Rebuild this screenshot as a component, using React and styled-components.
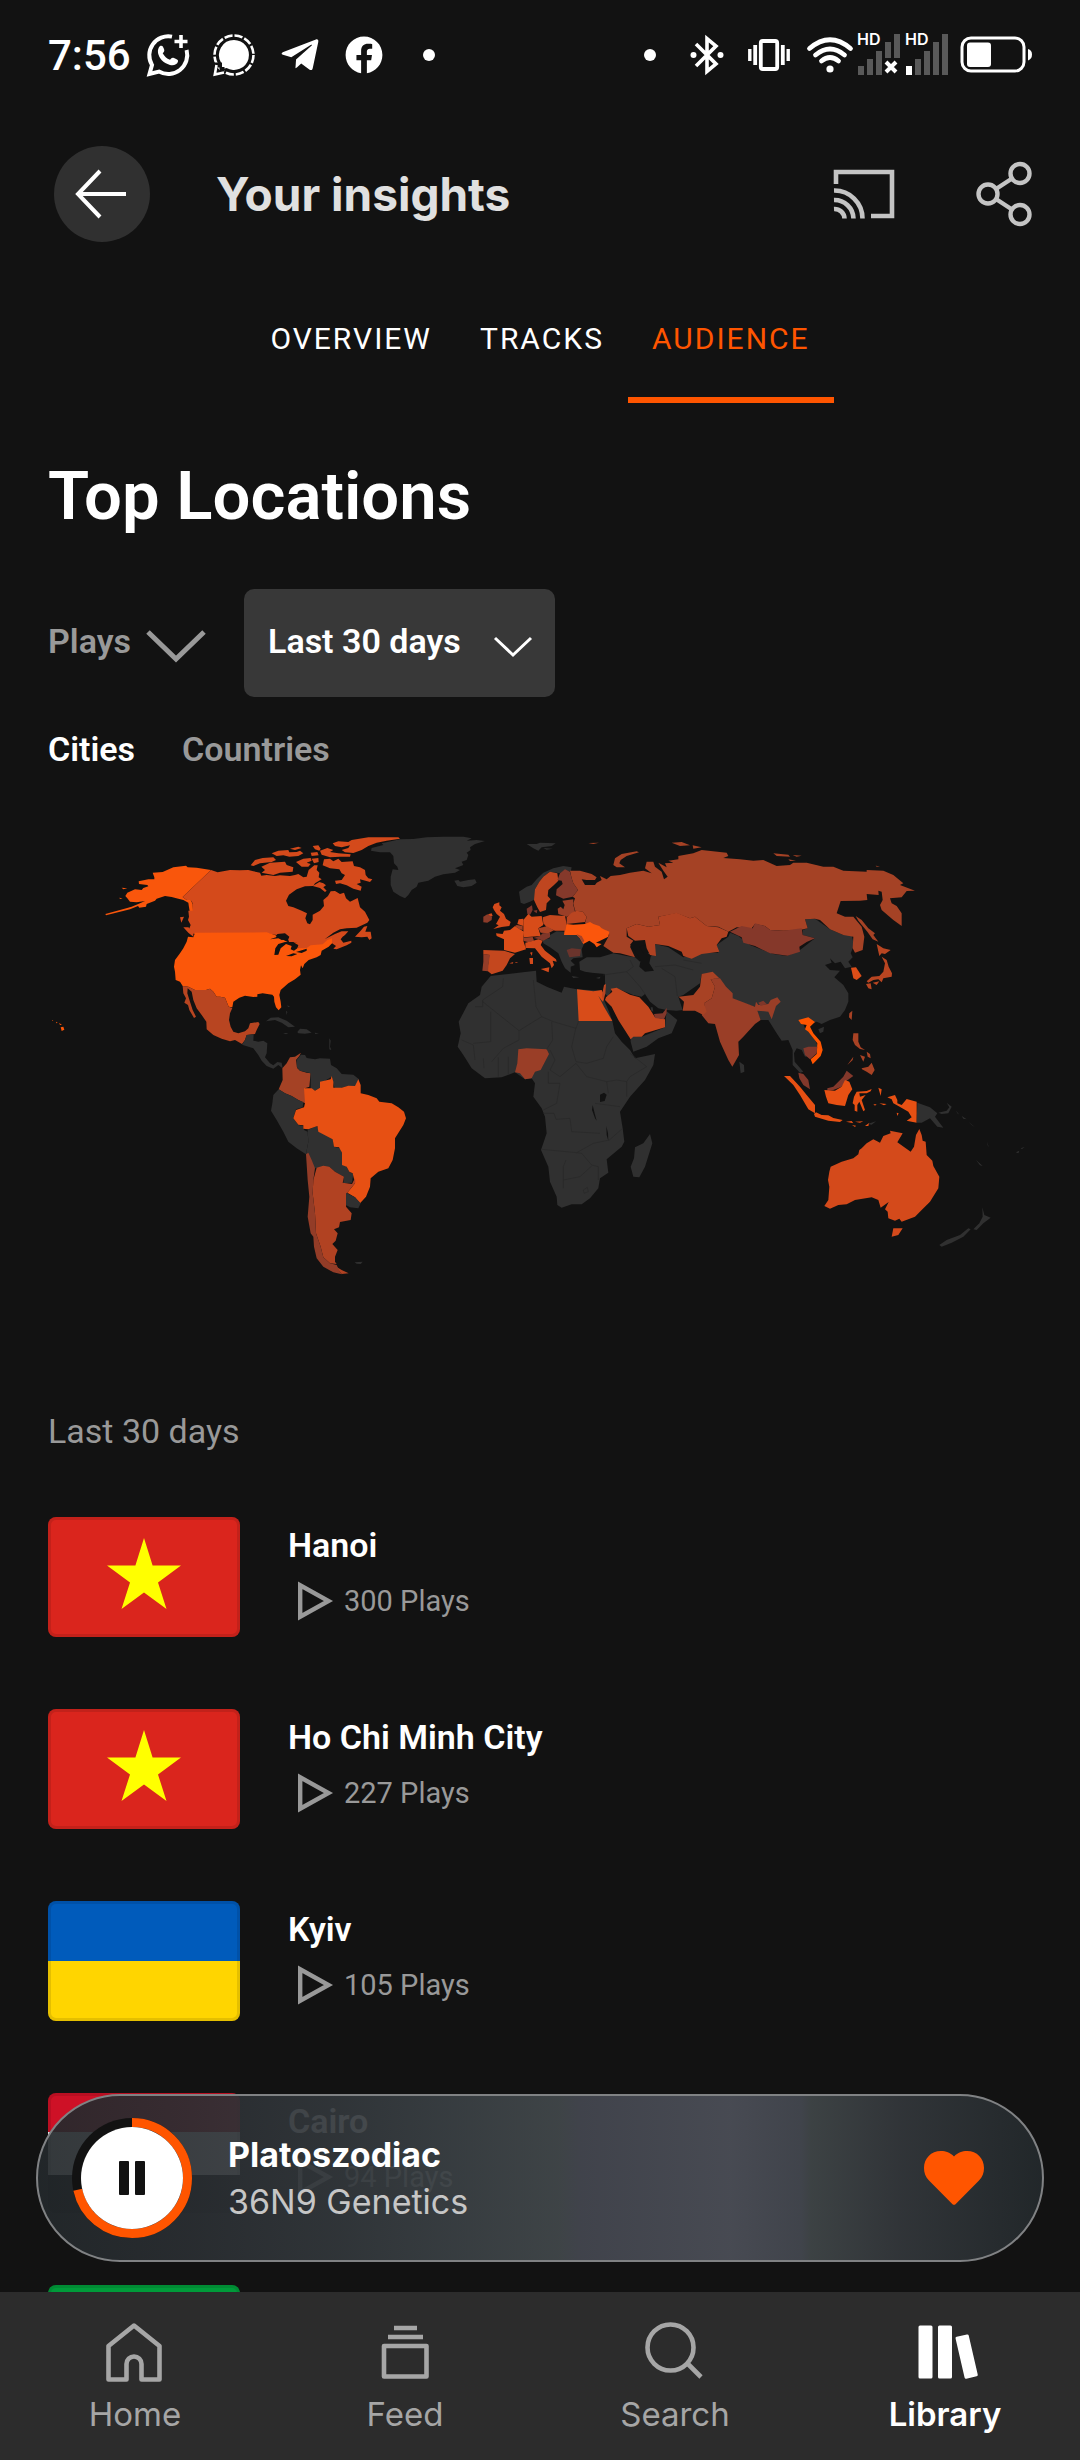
import React, { useState } from "react";
import styled, { createGlobalStyle } from "styled-components";
import { FaFacebook, FaTelegramPlane } from "react-icons/fa";

const GlobalStyle = createGlobalStyle`
  * {
    box-sizing: border-box;
  }
  body {
    margin: 0;
    background-color: #121212;
    color: #ffffff;
    font-family: Roboto, sans-serif;
  }
  button,
  select {
    padding: 0;
    border: none;
    background: none;
    color: inherit;
    font: inherit;
    cursor: pointer;
  }
  svg {
    display: block;
    flex-shrink: 0;
    overflow: visible;
  }
`;

const Screen = styled.div`
  position: relative;
  display: flex;
  flex-direction: column;
  height: 100vh;
  overflow: hidden;
`;

const StatusBar = styled.div`
  display: flex;
  align-items: center;
  justify-content: space-between;
  flex-shrink: 0;
  height: 110px;
  padding: 0 46px 0 48px;
`;

const StatusGroup = styled.div`
  display: flex;
  align-items: center;
  gap: ${props => props.$gap}px;
`;

const Clock = styled.span`
  margin-right: -8px;
  font-size: 42px;
  font-weight: 500;
`;

const Dot = styled.span`
  width: 12px;
  height: 12px;
  margin: 0 ${props => props.$space}px;
  border-radius: 50%;
  background-color: #ffffff;
`;

const Header = styled.header`
  display: flex;
  align-items: center;
  flex-shrink: 0;
  height: 168px;
  padding: 0 48px 0 54px;
`;

const BackButton = styled.button`
  display: flex;
  align-items: center;
  justify-content: center;
  width: 96px;
  height: 96px;
  border-radius: 50%;
  background-color: #303030;
`;

const Title = styled.h1`
  flex: 1;
  margin: 0 0 0 66px;
  color: #e0e0e0;
  font-family: Inter, sans-serif;
  font-size: 46px;
  font-weight: 700;
`;

const HeaderActions = styled.div`
  display: flex;
  align-items: center;
  gap: 82px;
  color: #c4c4c4;
`;

const Tabs = styled.nav`
  display: flex;
  justify-content: center;
  flex-shrink: 0;
`;

const Tab = styled.button`
  height: 125px;
  padding: 2px 24px 0;
  border-bottom: 6px solid ${props => (props.$active ? "#ff5500" : "transparent")};
  color: ${props => (props.$active ? "#ff5500" : "#ffffff")};
  font-size: 30px;
  letter-spacing: 2px;
`;

const Content = styled.main`
  flex: 1;
  min-height: 0;
  padding: 53px 48px 0;
  overflow: hidden;
`;

const SectionTitle = styled.h2`
  margin: 0 0 53px;
  font-size: 67px;
  font-weight: 600;
  line-height: 80px;
`;

const Filters = styled.div`
  display: flex;
  align-items: center;
  gap: 38px;
`;

const Filter = styled.label`
  display: flex;
  align-items: center;
  gap: ${props => (props.$boxed ? 32 : 14)}px;
  height: 108px;
  padding: ${props => (props.$boxed ? "0 22px 0 24px" : "0")};
  border-radius: 10px;
  background-color: ${props => (props.$boxed ? "#383838" : "transparent")};
  color: ${props => (props.$boxed ? "#ffffff" : "#999999")};
  font-size: 34px;
  font-weight: 600;
  line-height: 40px;
  select {
    margin-bottom: 4px;
    appearance: none;
    outline: none;
  }
  svg {
    margin-top: 8px;
  }
`;

const Scopes = styled.div`
  display: flex;
  gap: 47px;
  margin: 32px 0 51px;
`;

const Scope = styled.button`
  color: ${props => (props.$active ? "#ffffff" : "#999999")};
  font-size: 34px;
  font-weight: 600;
  line-height: 40px;
`;

const Map = styled.svg`
  width: 100%;
  height: auto;
`;

const Caption = styled.p`
  margin: 111px 0 66px;
  color: #999999;
  font-size: 34px;
  line-height: 40px;
`;

const CityList = styled.ul`
  display: flex;
  flex-direction: column;
  gap: 72px;
  margin: 0;
  padding: 0;
  list-style: none;
`;

const CityRow = styled.li`
  display: flex;
  gap: 48px;
`;

const Flag = styled.div`
  position: relative;
  display: flex;
  width: 192px;
  height: 120px;
  overflow: hidden;
  border-radius: 8px;
  &::after {
    content: "";
    position: absolute;
    inset: 0;
    border: 3px solid rgba(0, 0, 0, 0.1);
    border-radius: 8px;
  }
`;

const CityInfo = styled.div`
  display: flex;
  flex-direction: column;
  gap: 16px;
  padding-top: 8px;
`;

const CityName = styled.span`
  font-size: 34px;
  font-weight: 600;
  line-height: 40px;
`;

const Plays = styled.span`
  display: flex;
  align-items: center;
  gap: 11px;
  padding-left: 10px;
  color: #999999;
  font-size: 29px;
  line-height: 40px;
`;

const Player = styled.section`
  position: absolute;
  right: 36px;
  bottom: 198px;
  left: 36px;
  display: flex;
  align-items: center;
  height: 168px;
  padding: 0 58px 0 34px;
  border: 2px solid #808284;
  border-radius: 84px;
  background: linear-gradient(
    90deg,
    rgba(35, 40, 43, 0.92) 0%,
    rgba(42, 46, 50, 0.92) 15%,
    rgba(50, 55, 59, 0.92) 30%,
    rgba(57, 63, 67, 0.92) 40%,
    rgba(66, 72, 75, 0.92) 52%,
    rgba(68, 71, 80, 0.92) 54%,
    rgba(76, 79, 88, 0.92) 69%,
    rgba(68, 72, 80, 0.92) 76%,
    rgba(64, 70, 72, 0.92) 77%,
    rgba(51, 55, 59, 0.92) 86%,
    rgba(35, 41, 44, 0.92) 100%
  );
  font-family: Inter, sans-serif;
`;

const TrackInfo = styled.div`
  flex: 1;
  margin-left: 36px;
  color: #c6c6c6;
  font-size: 34px;
  line-height: 47px;
  strong {
    display: block;
    color: #ffffff;
    font-weight: 700;
  }
`;

const BottomNav = styled.nav`
  display: grid;
  grid-template-columns: repeat(4, 1fr);
  flex-shrink: 0;
  height: 168px;
  background-color: #2c2c2c;
`;

const NavItem = styled.a`
  display: flex;
  flex-direction: column;
  align-items: center;
  gap: 8px;
  padding-top: 24px;
  color: ${props => (props.$active ? "#ffffff" : "#a6a6a6")};
  font-family: Inter, sans-serif;
  font-size: 33px;
  font-weight: ${props => (props.$active ? 600 : 400)};
  line-height: 40px;
  text-decoration: none;
`;

const WhatsAppIcon = () => (
  <svg width="42" height="42" viewBox="0 0 42 42" fill="none" stroke="#fff">
    <path d="M25 2.6A19 19 0 0 0 5 31L2.5 40 12 37.6A19 19 0 0 0 39.6 16" strokeWidth="4" />
    <path d="M34 1v13M27.5 7.5h13" strokeWidth="3.6" />
    <path
      d="M13 12c2-1 3 0 4 3 .7 2 .2 2.700-1.300 4.200 1.600 3 4 5.300 7.300 6.600 1.500-2 2.300-2.500 4-1.700 3.400 1.600 4.400 2 4 3.500-.8 3.400-5 4.400-8 3.400C16 29 12 24 11 19c-.4-3 .4-5.500 2-7z"
      fill="#fff"
      stroke="none"
    />
  </svg>
);

const SignalIcon = () => (
  <svg width="42" height="42" viewBox="0 0 42 42">
    <path d="M21 6a15 15 0 1 1-7.500 28L6 36l2-7.500A15 15 0 0 1 21 6z" fill="#fff" />
    <circle cx="21" cy="21" r="19.500" fill="none" stroke="#fff" strokeWidth="2.600" strokeDasharray="8.200 2" />
    <path d="M1 31h8M9 41v-8" stroke="#121212" strokeWidth="5" />
    <path d="M3.500 31L1.800 40.500 11 38.500" fill="none" stroke="#fff" strokeWidth="2.600" />
  </svg>
);

const BluetoothIcon = () => (
  <svg width="34" height="38" viewBox="0 0 34 38" fill="none" stroke="#fff" strokeWidth="3.600">
    <path d="M6 8l20 20-9 7.500V2.500L26 10 6 30" />
    <circle cx="3.500" cy="19" r="3" fill="#fff" stroke="none" />
    <circle cx="30.500" cy="19" r="3" fill="#fff" stroke="none" />
  </svg>
);

const VibrateIcon = () => (
  <svg width="42" height="32" viewBox="0 0 42 32" stroke="#fff" fill="none">
    <rect x="12.800" y="2" width="16.400" height="28" rx="2" strokeWidth="3.800" />
    <path d="M7.200 6v20M34.800 6v20" strokeWidth="3.800" />
    <path d="M1.800 10v12M40.200 10v12" strokeWidth="3.400" />
  </svg>
);

const WifiIcon = () => (
  <svg width="46" height="36" viewBox="0 0 46 36" fill="none" stroke="#fff" strokeWidth="4.800" strokeLinecap="round">
    <path d="M2.500 11.500Q23-6 43.500 11.500M8.500 18q14.500-12 29 0M14.500 24q8.500-7 17 0" />
    <circle cx="23" cy="32" r="3.600" fill="#fff" stroke="none" />
  </svg>
);

const SimIcon = ({ offline }) => (
  <svg width="44" height="44" viewBox="0 0 44 44">
    <g fill="#595959">
      <rect x="1" y="33" width="6" height="9" fill={offline ? "#595959" : "#fff"} />
      <rect x="10" y="26" width="6" height="16" />
      <rect x="19" y="18" width="6" height="24" />
      <rect x="28" y="9" width="6" height={offline ? 16 : 33} />
      <rect x="37" y="1" width="6" height={offline ? 24 : 41} />
    </g>
    {offline && <path d="M29 29l10 10M39 29L29 39" stroke="#fff" strokeWidth="4" />}
    <text x="0" y="12" fill="#fff" fontFamily="Inter, sans-serif" fontSize="16" fontWeight="600">
      HD
    </text>
  </svg>
);

const BatteryIcon = () => (
  <svg width="74" height="38" viewBox="0 0 74 38">
    <rect x="2" y="2" width="62" height="33" rx="9" fill="none" stroke="#fff" strokeWidth="3" />
    <rect x="7" y="6.500" width="24" height="24.500" rx="3" fill="#fff" />
    <path d="M68 13q4 1 4 5.500T68 24.500z" fill="#fff" />
  </svg>
);

const ArrowIcon = () => (
  <svg width="52" height="50" viewBox="0 0 52 50" fill="none" stroke="#fff" strokeWidth="4">
    <path d="M24 2L2 25l22 23M2 25h48" />
  </svg>
);

const CastIcon = () => (
  <svg width="60" height="50" viewBox="0 0 60 50" fill="none" stroke="currentColor" strokeWidth="4.600">
    <path d="M2 15V3h56v44H37" />
    <path d="M0 21.500a28 28 0 0 1 28.500 28M0 31a19 19 0 0 1 19.500 18.500M0 40a10 10 0 0 1 10.500 9.500" />
  </svg>
);

const ShareIcon = () => (
  <svg width="56" height="64" viewBox="0 0 56 64" fill="none" stroke="currentColor" strokeWidth="4.400">
    <circle cx="12" cy="32" r="9.500" />
    <circle cx="44" cy="11.500" r="9.500" />
    <circle cx="44" cy="52.500" r="9.500" />
    <path d="M20 27L36 16.500M20 37L36 47.500" />
  </svg>
);

const Chevron = ({ width, height, stroke }) => (
  <svg width={width} height={height} viewBox={`0 0 ${width} ${height}`} fill="none" stroke="currentColor">
    <path d={`M2 2L${width / 2} ${height - stroke}L${width - 2} 2`} strokeWidth={stroke} />
  </svg>
);

const PlayIcon = () => (
  <svg width="35" height="40" viewBox="0 0 35 40" fill="none" stroke="currentColor" strokeWidth="4.400">
    <path d="M2.200 4.300v31.400L30.500 20z" />
  </svg>
);

const ProgressIcon = () => (
  <svg width="120" height="120" viewBox="0 0 120 120">
    <circle cx="60" cy="60" r="60" fill="#121212" />
    <circle
      cx="60"
      cy="60"
      r="55.500"
      fill="none"
      stroke="#ff5500"
      strokeWidth="9"
      pathLength="100"
      strokeDasharray="71.600 28.400"
      transform="rotate(-90 60 60)"
    />
    <circle cx="60" cy="60" r="51" fill="#fff" />
    <rect x="47" y="43" width="10" height="34" rx="1" fill="#121212" />
    <rect x="63" y="43" width="10" height="34" rx="1" fill="#121212" />
  </svg>
);

const HeartIcon = () => (
  <svg width="60" height="54" viewBox="0 0 60 54">
    <path
      d="M30 5.500C34 1.500 38 0 43 0c10 0 17 7.500 17 17 0 5-1.500 9-5 12.500L31.500 53.200q-1.500 1.200-3 0L5 29.500C1.500 26 0 22 0 17 0 7.500 7 0 17 0c5 0 9 1.500 13 5.500z"
      fill="#ff5500"
    />
  </svg>
);

const HomeIcon = () => (
  <svg width="60" height="70" viewBox="0 0 60 70" fill="none" stroke="currentColor" strokeWidth="4.600">
    <path
      d="M29 9.500L3.500 30v33.500h18V48a7.500 7.500 0 0 1 15 0v15.500h18V30z"
      strokeLinejoin="round"
    />
  </svg>
);

const FeedIcon = () => (
  <svg width="60" height="70" viewBox="0 0 60 70" fill="none" stroke="currentColor" strokeWidth="4.600">
    <path d="M19 12h23M13 21h35" />
    <rect x="9" y="30" width="42.500" height="30.500" strokeLinejoin="round" />
  </svg>
);

const SearchIcon = () => (
  <svg width="60" height="70" viewBox="0 0 60 70" fill="none" stroke="currentColor" strokeWidth="4.600">
    <circle cx="25.500" cy="31.500" r="23" />
    <path d="M42 47l14 14" />
  </svg>
);

const LibraryIcon = () => (
  <svg width="60" height="70" viewBox="0 0 60 70" fill="currentColor">
    <rect x="3.500" y="9.500" width="14" height="53" rx="1.500" />
    <rect x="23" y="9.500" width="14" height="53" rx="1.500" />
    <rect x="45" y="19" width="13.500" height="43" rx="1.500" transform="rotate(-13 52 41)" />
  </svg>
);

const americas = [
  // alaska
  ["#f9560c", "M438 137L443 142L470 143L513 150L428 231L440 240L452 240L458 252L459 272L450 280L447 262L445 248L430 240L415 236L395 231L375 228L350 236L345 242L320 252L318 260L298 263L294 258L270 268L240 275L198 286L196 282L240 270L275 260L300 250L315 243L290 247L270 245L262 235L256 228L262 218L285 208L305 210L310 204L325 199L322 195L297 192L296 184L325 178L343 178L343 172L338 158L368 156L400 142Z M245 203L262 205L250 208Z M238 233L248 235L240 237Z"],
  // canada
  ["#d44a1b", "M513 150L533 157L570 150L600 151L625 150L640 154L660 158L664 167L680 165L705 168L720 166L750 168L765 165L775 162L790 172L800 170L806 150L823 136L833 136L830 150L838 158L836 172L845 178L825 190L820 198L795 199L770 208L747 224L738 242L745 258L760 262L785 272L801 280L796 295L802 310L810 313L818 300L818 284L840 272L852 258L850 240L864 228L872 214L885 213L900 222L912 218L918 235L930 245L953 234L960 262L975 275L988 300L982 308L950 323L920 325L900 328L880 338L855 357L885 342L905 334L925 334L915 345L908 350L902 358L910 368L934 362L934 368L920 376L890 388L880 386L888 378L876 370L862 372L800 390L770 392L775 385L770 368L748 368L742 352L725 346L705 344L680 340L465 342L455 340L448 325L452 315L444 300L447 290L445 272L459 272L458 250L452 240L440 240L428 231Z"],
  ["#d44a1b", "M632 136L645 120L668 114L700 112L708 120L695 126L660 130L640 138Z M664 140L690 128L735 125L740 135L760 142L758 155L720 158L700 165L665 158L675 150Z M695 100L715 92L745 90L748 97L770 96L780 92L790 100L775 108L748 110L730 106L710 108Z M750 86L775 80L785 84L765 90Z M768 126L790 116L812 114L815 122L800 128L812 132L805 140L785 140Z M812 98L832 96L836 106L815 108Z M818 78L835 76L842 86L838 92L825 88Z M815 116L835 114L836 126L822 130Z M840 92L862 84L880 90L870 96L895 100L932 103L930 110L900 110L870 112L845 104Z"],
  ["#d44a1b", "M878 70L895 64L925 66L935 60L985 52L1075 52L1080 56L1040 62L1010 68L985 78L965 90L940 99L915 97L905 90L925 84L930 76L905 82L885 78Z M848 136L852 118L870 116L880 124L895 116L905 126L938 124L942 138L960 142L975 150L977 165L985 175L997 178L990 186L960 178L962 188L950 192L965 200L962 212L940 206L920 196L900 190L888 192L885 182L905 180L915 165L905 160L898 148L870 145Z M818 198L832 190L838 186L850 190L858 196L850 202L860 212L855 216L840 204Z"],
  ["#d44a1b", "M945 350L962 332L972 320L982 318L976 335L992 335L995 355L988 360L982 350L965 352Z M430 322L445 322L460 335L460 350L445 338Z M420 292L432 290L424 308Z"],
  // usa
  ["#fb570a", "M465 338L680 337L705 345L735 362L748 368L770 368L775 385L800 384L812 376L848 373L862 360L876 355L876 370L866 380L845 392L842 405L830 412L806 420L793 432L788 445L783 436L780 450L782 464L765 478L745 490L722 510L718 525L722 545L724 562L716 571L708 562L703 545L702 530L697 524L682 522L668 520L652 523L652 530L640 531L615 527L598 533L580 545L577 562L566 560L555 533L540 530L530 530L520 515L510 506L498 510L465 510L445 500L428 498L420 485L407 480L405 455L402 440L405 420L420 400L430 385L440 365L444 350L460 352Z M62 622L70 620L73 629L65 633Z M36 600L40 602L37 603Z M48 605L53 608L49 610Z M57 609L66 614L60 615Z"],
  ["#121212", "M690 358L708 352L712 342L735 340L748 350L745 358L725 360L715 355Z M703 405L706 385L715 372L735 366L760 366L775 376L772 385L762 392L752 388L755 378L738 372L722 385L715 404Z M738 408L760 400L772 402L755 409Z M768 396L800 386L800 392L785 399Z"],
  // mexico
  ["#b84521", "M428 498L445 500L465 510L498 510L510 506L520 515L530 530L540 530L555 533L566 560L577 564L570 580L567 600L572 620L580 635L595 640L615 634L625 625L630 610L655 606L659 612L650 630L645 642L620 645L615 660L606 672L585 660L570 664L545 656L520 645L500 628L499 605L485 585L470 565L460 540L455 515L443 505L442 520L450 545L458 570L468 590L462 594L448 570L444 555L433 548L438 535L430 520Z"],
  // central america and the caribbean
  ["#303030", "M606 674L615 660L620 645L641 643L640 662L655 665L670 662L682 670L680 700L675 712L690 730L700 736L712 726L725 728L728 745L715 735L700 746L680 738L665 722L655 705L640 685Z M678 604L692 593L715 592L740 602L765 620L745 622L725 608L705 600Z M772 636L780 626L800 628L815 638L795 641L775 640Z M729 639L745 640L738 643Z M824 638L837 640L826 642Z M738 572L742 576L740 585Z M742 556L750 560L744 561Z M868 655L872 662L870 680L874 690L868 688Z"],
  ["#a54225", "M783 698L778 708L768 720L772 745L780 752L800 758L812 760L808 800L795 805L795 850L775 840L755 828L735 820L716 808L728 780L727 745L740 730L750 712L765 710Z"],
  ["#303030", "M783 704L795 705L800 714L825 718L840 715L870 716L873 735L890 745L905 762L940 764L957 778L948 798L925 798L905 803L885 807L878 785L875 770L850 785L842 790L840 803L825 812L812 805L812 760L780 752L770 740L770 720Z M716 808L735 820L755 828L775 840L790 846L788 862L768 868L760 895L775 915L790 918L792 930L803 935L805 965L798 1003L770 985L745 965L730 935L710 900L693 872L697 850L700 825Z"],
  ["#303030", "M803 930L830 918L838 935L865 945L880 958L882 980L900 985L906 998L908 1030L920 1040L928 1055L940 1062L936 1088L910 1090L912 1070L885 1055L868 1040L840 1043L822 1045L812 1020L798 1003L805 965Z"],
  // brazil
  ["#e75013", "M840 785L850 783L872 778L875 768L880 785L880 803L905 803L925 797L945 798L955 778L962 795L962 820L985 825L1010 835L1018 845L1055 850L1075 862L1092 875L1098 895L1090 915L1065 955L1065 985L1058 1020L1045 1045L1015 1055L992 1075L990 1100L978 1130L960 1150L945 1132L922 1118L945 1090L938 1060L928 1055L920 1040L906 1035L906 998L897 982L882 980L878 958L835 935L832 918L805 928L790 926L790 916L775 914L760 895L768 870L792 862L795 850L792 805L815 805L825 812L840 803Z"],
  ["#b14222", "M830 1043L850 1037L868 1040L885 1055L912 1070L908 1088L936 1092L945 1074L946 1088L922 1118L918 1160L935 1180L932 1200L900 1206L897 1222L882 1228L893 1240L887 1262L877 1272L893 1290L885 1310L885 1325L890 1332L870 1330L850 1312L842 1280L828 1240L825 1180L818 1120L820 1080Z M885 1338L905 1350L926 1360L905 1362Z"],
  ["#933c27", "M798 1003L805 998L815 1020L825 1045L820 1080L818 1120L825 1180L828 1240L842 1280L850 1312L870 1330L890 1335L898 1352L905 1363L880 1357L850 1340L830 1315L822 1280L820 1250L812 1240L803 1190L808 1130L803 1080Z"],
  ["#303030", "M918 1118L945 1132L962 1150L955 1165L930 1162L918 1155Z M944 1327L968 1325L962 1332L950 1331Z"]
];

const eurasiaAfrica = [
  // greenland, iceland, svalbard
  ["#303030", "M-87 92L-60 97L-30 97L-20 108L-18 130L-8 140L-5 150L-22 148L-28 170L-28 195L-20 215L0 228L15 235L25 225L35 210L50 200L55 188L85 182L105 170L130 163L165 158L180 150L165 145L190 135L185 125L200 120L205 105L200 98L212 90L210 82L225 72L255 63L230 60L200 62L215 55L190 50L130 50L80 52L40 57L0 58L-55 70L-50 75L-85 84Z M163 182L175 180L180 185L205 180L225 178L230 188L215 198L190 202L172 198Z M380 72L410 72L420 68L467 70L455 78L425 82L415 92L400 85Z M430 84L458 86L440 89Z"],
  // africa
  ["#303030", "M272 468L290 466L325 462L375 456L408 452L410 485L440 500L485 518L492 500L530 508L605 512L612 540L625 570L637 603L645 640L665 665L690 690L705 715L765 702L760 735L735 780L690 830L660 875L668 925L673 965L665 980L620 1018L625 1058L600 1075L595 1105L570 1135L545 1153L515 1153L485 1163L472 1155L470 1130L450 1085L445 1040L423 990L440 940L435 890L425 865L400 830L405 790L395 775L375 778L345 757L305 772L255 775L215 745L190 705L173 680L182 640L176 605L205 550L240 525L245 500Z M750 942L757 970L735 1040L718 1072L700 1070L692 1040L702 1015L705 982L730 970Z"],
  // turkey across to china
  ["#303030", "M538 425L560 412L600 412L640 400L680 408L705 412L720 425L745 400L762 390L765 372L805 382L850 412L905 398L955 398L950 375L985 350L990 338L1015 348L1050 375L1120 402L1160 408L1200 390L1245 355L1208 345L1208 330L1223 325L1215 298L1245 296L1290 328L1330 345L1355 345L1362 375L1352 400L1358 412L1345 425L1355 440L1335 445L1322 425L1305 430L1290 415L1295 428L1275 435L1290 450L1320 452L1303 472L1330 495L1345 520L1345 545L1335 570L1320 590L1290 600L1265 612L1250 605L1232 612L1205 600L1215 625L1240 650L1255 680L1245 705L1215 710L1205 690L1190 685L1182 700L1184 725L1210 755L1200 758L1178 735L1178 690L1165 660L1145 662L1130 640L1105 600L1082 600L1070 575L1065 560L1000 540L970 500L940 470L905 462L900 490L850 525L835 530L848 570L830 572L800 570L775 565L750 545L735 522L725 530L700 525L650 505L635 508L625 530L612 520L615 490L615 462L575 458L555 455L540 450Z"],
  // balkans and greece
  ["#303030", "M450 345L470 334L492 335L530 345L545 355L552 372L545 388L548 412L520 415L512 422L525 435L512 440L512 458L495 445L485 425L475 400L450 382L430 370L428 360L450 355Z M515 468L538 472L520 474Z M588 474L602 470L598 476Z"],
  ["#d44a1b", "M283 252L298 247L298 256L305 262L300 272L312 282L318 296L332 306L328 318L305 321L280 327L296 316L288 312L293 303L300 290L290 282L282 270L278 262Z M264 283L275 280L278 288L270 290Z"],
  ["#8c3b29", "M250 290L262 283L276 290L275 300L262 308L250 307Z"],
  ["#303030", "M357 215L380 200L395 195L410 178L430 158L460 145L490 138L515 142L512 155L495 150L480 160L450 155L430 170L418 185L405 208L405 238L390 245L372 252L362 248Z"],
  ["#bf4620", "M405 208L418 185L430 170L450 155L472 160L475 182L462 195L445 210L443 228L452 238L440 250L438 270L420 276L412 262L402 240Z"],
  // russia
  ["#a54225", "M510 152L540 152L575 162L590 172L585 180L560 180L545 178L555 195L585 195L590 188L605 180L600 168L620 178L632 168L660 165L690 158L730 152L755 160L735 145L740 125L760 125L765 140L785 155L792 178L803 170L790 152L775 128L800 142L795 130L820 128L805 122L835 118L835 108L880 100L905 90L980 98L985 108L970 114L1020 118L1060 122L1090 120L1130 138L1170 135L1180 128L1220 128L1270 140L1300 140L1330 152L1400 155L1400 150L1450 152L1480 165L1510 190L1500 195L1545 212L1520 213L1505 232L1470 235L1475 250L1490 258L1505 280L1505 318L1480 300L1445 270L1440 255L1448 240L1445 215L1435 212L1436 225L1400 222L1402 240L1380 242L1322 243L1310 280L1335 290L1360 290L1385 320L1393 350L1388 390L1365 398L1358 385L1360 350L1330 345L1290 328L1260 300L1245 296L1215 298L1223 325L1200 330L1150 332L1110 330L1095 318L1065 312L1055 325L1010 322L985 335L955 320L920 318L885 290L870 295L830 280L775 290L780 315L745 320L710 312L680 325L680 350L705 365L690 380L705 412L660 400L640 398L610 378L628 345L615 330L570 322L555 310L560 290L548 275L525 272L520 250L525 235L518 230L534 210L520 190L515 175Z"],
  ["#a54225", "M640 135L645 115L665 102L710 94L717 97L680 108L662 120L658 130L675 142L650 142Z M815 68L845 66L870 76L840 78Z M878 76L905 82L880 86Z M565 69L597 68L580 72Z M1120 100L1165 104L1170 110L1130 108Z M1178 105L1205 107L1190 110Z M1165 118L1188 122L1170 123Z M1427 137L1440 139L1430 140Z M1367 288L1385 300L1405 325L1425 340L1420 345L1435 365L1418 358L1402 335L1375 302Z"],
  ["#85392b", "M480 160L495 148L510 155L515 175L520 190L534 210L518 230L490 236L468 226L470 208L488 192L485 182L472 180Z"],
  ["#7a352b", "M380 266L396 256L398 270L390 285L382 282Z M400 272L412 270L410 280Z"],
  ["#9a3e27", "M487 242L520 238L520 255L525 275L510 285L500 290L475 282L473 266L482 260L490 268L494 255Z"],
  ["#ba4521", "M500 292L515 278L530 272L548 275L560 290L555 306L500 312Z"],
  ["#fb560c", "M495 320L500 312L520 314L555 312L570 306L580 312L598 318L605 325L628 335L625 350L605 360L588 368L605 372L590 382L583 372L568 362L550 372L540 355L530 345L492 345Z"],
  ["#a54225", "M530 343L545 348L553 362L548 370L540 355Z"],
  ["#c4471e", "M428 292L450 285L495 288L500 312L496 332L465 332L440 322L430 310Z"],
  ["#d84c19", "M370 300L385 282L395 290L425 288L430 315L415 325L422 348L372 352L370 330Z"],
  ["#dc4d18", "M288 340L308 342L312 332L330 330L345 318L360 328L372 335L370 362L378 388L345 398L312 390L312 358L290 348Z"],
  ["#a54225", "M345 318L350 315L368 318L368 330L358 328Z"],
  ["#d84c19", "M352 312L356 298L370 296L370 318Z"],
  ["#9a3e27", "M370 353L398 351L402 362L385 367L370 362Z"],
  ["#7f372a", "M400 354L420 348L428 340L450 338L450 352L430 362L415 357Z"],
  ["#a84224", "M415 325L440 319L462 331L445 340L422 338Z"],
  ["#d44a1b", "M376 368L400 362L415 358L428 362L422 375L435 392L468 418L470 425L458 422L462 435L455 445L450 430L425 410L405 385L376 384Z M422 447L448 442L446 457Z M388 414L399 414L399 432L390 432Z M390 398L397 396L396 408Z"],
  ["#c4471e", "M250 390L312 392L345 402L330 415L320 435L308 452L275 463L262 452L268 405L250 402Z M328 430L340 426L338 431Z M345 426L355 427L348 429Z"],
  ["#943d28", "M250 402L270 404L266 430L264 454L247 452L250 425Z"],
  ["#6a342c", "M500 390L515 385L543 388L540 408L508 412Z"],
  ["#121212", "M690 375L700 362L735 360L735 375L718 380L732 402L758 402L752 410L748 430L762 452L735 455L718 440L722 420L710 400L700 385Z"],
  // kazakhstan
  ["#b04222", "M680 325L710 312L745 320L780 315L775 290L830 278L870 295L885 290L920 318L955 322L985 335L980 350L965 355L950 375L958 395L905 402L875 416L850 408L845 395L805 378L765 372L768 408L750 405L740 385L735 360L705 362L685 348Z"],
  ["#9a3e27", "M355 688L380 685L440 688L447 702L422 750L405 755L395 775L375 778L360 760L345 757L352 730Z"],
  ["#d84c19", "M531 508L580 514L605 510L612 525L608 545L595 527L612 560L637 603L536 603Z"],
  ["#b84521", "M612 495L618 492L616 520L610 545L606 525Z"],
  ["#303030", "M692 648L725 650L795 622L797 598L800 574L832 600L815 640L775 655L740 680L700 695L692 665Z M752 562L758 562L760 575L754 572Z"],
  ["#c4471e", "M618 532L637 515L632 506L650 503L690 524L718 532L745 560L765 592L795 598L795 622L735 640L725 650L700 650L692 658L655 600L635 560L615 540Z"],
  ["#83382b", "M762 582L788 580L800 564L800 580L792 598L765 594Z"],
  ["#121212", "M600 824L612 818L620 824L614 843L600 846Z M578 855L584 880L590 902L585 895L576 870Z M619 918L624 940L625 962L620 945Z"]
];

const africanBorders =
  "M310 475L308 500L248 540V560L225 560M248 545L357 632L425 590L408 560L400 480M425 590L460 605L528 625L536 603M272 575V665L220 670M357 632V660L310 685L275 725M455 605L458 660L440 688M528 622L515 680L528 725L560 730L610 715L620 680L640 650M185 660L220 675L225 720M450 690L465 720L450 750L480 770L528 730M528 730L560 770L620 785L650 780L680 785L690 770L740 740L690 700M680 785V830M620 785L625 820M585 850L660 860M445 755V790L480 790L470 850L430 870M430 880L462 880L468 898L510 895L515 935L600 940M425 988L530 998L580 970L628 960L668 925M530 998L545 1000L575 1035L595 1040V1080M490 1105V1040L498 1020M490 1080L540 1070L575 1038M295 712V770M325 710V765M250 715L252 745M550 1110L562 1102L565 1115L552 1120Z M690 420L700 440L680 455L720 500L735 522M680 455L610 465M785 445L825 470L832 528M765 440L825 435L880 450M905 430L850 420";

const asiaPacific = [
  ["#85382a", "M90 335L125 318L158 325L165 310L195 318L210 330L250 332L305 325L308 345L345 355L320 366L298 380L300 395L262 407L210 400L165 378L130 368L125 352Z"],
  ["#9a3e27", "M32 478L60 475L78 500L98 520L98 535L165 560L168 545L175 555L205 552L212 540L232 532L242 545L228 558L215 598L205 575L172 572L182 600L165 612L130 650L115 665L117 705L97 740L85 720L60 665L45 612L25 610L5 585L15 570L12 550L35 535L45 500Z"],
  ["#7f372a", "M175 548L190 542L200 552L182 558Z"],
  ["#a84224", "M5 462L38 455L58 475L32 478L45 500L35 535L12 550L20 575L10 585L-15 572L-52 572L-48 545L-64 530L-20 525L0 500Z"],
  ["#303030", "M118 725L132 735L133 755L122 760Z M355 628L372 620L370 635L360 640Z"],
  ["#ff5500", "M295 600L325 592L345 606L330 620L340 640L362 665L368 690L362 708L338 733L332 718L350 702L352 670L325 635L315 628L320 615L303 612Z"],
  ["#83382b", "M310 685L325 680L352 680L350 700L330 718L315 705Z M295 758L310 762L325 780L330 808L310 795L298 775Z M382 805L400 800L430 770L440 752L460 768L440 782L425 800L400 810L382 812Z"],
  // indonesia
  ["#e75013", "M252 768L270 768L300 800L320 825L345 855L345 880L325 868L300 825L280 795Z M342 882L348 877L365 885L385 886L400 894L428 900L420 906L385 902L345 890Z M438 905L455 903L460 910Z M465 905L490 904L480 908Z M456 915L468 917L465 921Z M495 918L508 908L505 918Z M373 810L405 812L425 800L435 780L448 785L457 808L445 825L435 858L410 855L385 850L378 830Z M462 830L470 815L500 813L515 807L512 814L500 820L478 820L480 830L497 825L485 840L495 870L490 874L478 845L472 855L472 875L464 872L464 855L458 850Z M535 803L545 808L542 828Z M538 850L560 852L552 856Z M520 853L530 853L525 857Z M562 832L585 825L592 840L592 850L605 855L620 837L650 845L650 908L620 902L635 892L625 875L595 858L580 850L575 838Z M590 878L596 880L592 888Z"],
  ["#303030", "M652 848L690 862L712 880L705 890L730 923L712 920L690 895L665 908L650 908Z M715 878L740 872L748 862L740 848L755 860L745 880L725 882Z M503 912L528 904L515 914Z M768 872L778 884L772 880Z M785 888L800 898L790 896Z M805 905L825 922L815 915Z M862 965L866 982L863 976Z M828 1020L848 1038L840 1036Z M948 997L958 992L955 1000Z M962 985L974 981L966 987Z"],
  ["#a84224", "M460 640L475 640L475 665L482 682L495 690L480 687L465 675L458 660Z M480 705L495 710L490 725Z M500 695L510 702L512 715L503 710Z M485 745L505 740L515 728L524 750L515 765L500 755L486 748Z M442 735L460 710L458 720Z M448 580L457 572L455 600L447 592Z"],
  ["#dc4d18", "M453 443L468 442L485 468L470 480L460 475Z"],
  ["#b84521", "M530 372L550 385L572 390L555 402L545 400L538 408Z M545 410L560 420L566 440L576 460L575 470L550 475L545 487L535 478L520 480L505 488L500 484L515 470L538 468L550 455L555 430Z M498 492L512 490L515 508L505 505Z M518 488L538 484L530 495Z"],
  // australia
  ["#d44a1b", "M392 1040L425 1025L460 1015L475 1003L478 990L485 985L500 970L520 958L540 968L550 948L572 940L570 932L608 940L592 967L632 995L642 980L648 945L658 927L665 945L668 962L677 965L680 1005L697 1022L700 1038L718 1070L715 1105L690 1145L665 1170L645 1190L605 1205L598 1196L585 1202L565 1195L563 1175L555 1168L566 1146L542 1163L535 1140L515 1132L465 1140L440 1153L415 1155L390 1166L373 1158L385 1140L388 1100L384 1080L388 1055Z M580 1225L608 1225L595 1245L575 1250Z"],
  ["#303030", "M847 1162L853 1185L872 1193L850 1210L830 1230L820 1228L838 1210L848 1190Z M718 1275L740 1260L780 1245L805 1225L812 1228L790 1250L755 1268L725 1280Z"]
];

const Regions = ({ shapes, offset }) => (
  <g transform={`translate(${offset} 0)`}>
    {shapes.map(([fill, d]) => (
      <path key={d} d={d} fill={fill} />
    ))}
  </g>
);

const WorldMap = () => (
  <Map viewBox="24 0 2952 1440" role="img">
    <Regions shapes={americas} offset={0} />
    <Regions shapes={eurasiaAfrica} offset={1080} />
    <Regions shapes={asiaPacific} offset={1980} />
    <path d={africanBorders} transform="translate(1080 0)" fill="none" stroke="#272727" strokeWidth="2" />
  </Map>
);

const flags = {
  vn: (
    <>
      <rect width="192" height="120" fill="#da251d" />
      <path d="M96 21L104.600 48.500H133L110 65.500L118.500 92L96 75.500L73.500 92L82 65.500L59 48.500H87.400Z" fill="#ffff00" />
    </>
  ),
  ua: (
    <>
      <rect width="192" height="60" fill="#005bbb" />
      <rect y="60" width="192" height="60" fill="#ffd500" />
    </>
  ),
  eg: (
    <>
      <rect width="192" height="39" fill="#ce1126" />
      <rect y="39" width="192" height="43" fill="#ffffff" />
      <rect y="82" width="192" height="38" fill="#000000" />
    </>
  ),
  br: (
    <>
      <rect width="192" height="120" fill="#009b3a" />
      <path d="M96 14L176 60L96 106L16 60Z" fill="#fedf00" />
      <circle cx="96" cy="60" r="26" fill="#002776" />
    </>
  )
};

const cities = [
  { name: "Hanoi", flag: "vn", plays: 300 },
  { name: "Ho Chi Minh City", flag: "vn", plays: 227 },
  { name: "Kyiv", flag: "ua", plays: 105 },
  { name: "Cairo", flag: "eg", plays: 94 },
  { flag: "br" }
];

const navItems = [
  { label: "Home", Icon: HomeIcon },
  { label: "Feed", Icon: FeedIcon },
  { label: "Search", Icon: SearchIcon },
  { label: "Library", Icon: LibraryIcon }
];

const App = () => {
  const [tab, setTab] = useState("AUDIENCE");
  const [scope, setScope] = useState("Cities");

  return (
    <Screen>
      <GlobalStyle />
      <StatusBar>
        <StatusGroup $gap={24}>
          <Clock>7:56</Clock>
          <WhatsAppIcon />
          <SignalIcon />
          <FaTelegramPlane size={42} />
          <FaFacebook size={38} />
          <Dot $space={16} />
        </StatusGroup>
        <StatusGroup $gap={11}>
          <StatusGroup $gap={4}>
            <StatusGroup $gap={17}>
              <StatusGroup $gap={24}>
                <Dot $space={10} />
                <BluetoothIcon />
                <VibrateIcon />
              </StatusGroup>
              <WifiIcon />
            </StatusGroup>
            <SimIcon offline />
            <SimIcon />
          </StatusGroup>
          <BatteryIcon />
        </StatusGroup>
      </StatusBar>

      <Header>
        <BackButton aria-label="Back">
          <ArrowIcon />
        </BackButton>
        <Title>Your insights</Title>
        <HeaderActions>
          <button aria-label="Cast">
            <CastIcon />
          </button>
          <button aria-label="Share">
            <ShareIcon />
          </button>
        </HeaderActions>
      </Header>

      <Tabs>
        {["OVERVIEW", "TRACKS", "AUDIENCE"].map(name => (
          <Tab key={name} $active={name === tab} onClick={() => setTab(name)}>
            {name}
          </Tab>
        ))}
      </Tabs>

      <Content>
        <SectionTitle>Top Locations</SectionTitle>
        <Filters>
          <Filter>
            <select aria-label="Metric">
              <option>Plays</option>
            </select>
            <Chevron width={60} height={34} stroke={5} />
          </Filter>
          <Filter $boxed>
            <select aria-label="Period">
              <option>Last 30 days</option>
            </select>
            <Chevron width={40} height={22} stroke={3} />
          </Filter>
        </Filters>
        <Scopes>
          {["Cities", "Countries"].map(name => (
            <Scope key={name} $active={name === scope} onClick={() => setScope(name)}>
              {name}
            </Scope>
          ))}
        </Scopes>
        <WorldMap />
        <Caption>Last 30 days</Caption>
        <CityList>
          {cities.map(({ name, flag, plays }, index) => (
            <CityRow key={index}>
              <Flag>
                <svg width="192" height="120" viewBox="0 0 192 120">
                  {flags[flag]}
                </svg>
              </Flag>
              {name && (
                <CityInfo>
                  <CityName>{name}</CityName>
                  <Plays>
                    <PlayIcon />
                    {plays} Plays
                  </Plays>
                </CityInfo>
              )}
            </CityRow>
          ))}
        </CityList>
      </Content>

      <Player>
        <button aria-label="Pause">
          <ProgressIcon />
        </button>
        <TrackInfo>
          <strong>Platoszodiac</strong>
          36N9 Genetics
        </TrackInfo>
        <button aria-label="Like">
          <HeartIcon />
        </button>
      </Player>

      <BottomNav>
        {navItems.map(({ label, Icon }) => (
          <NavItem key={label} href="#" $active={label === "Library"}>
            <Icon />
            {label}
          </NavItem>
        ))}
      </BottomNav>
    </Screen>
  );
};

export default App;
